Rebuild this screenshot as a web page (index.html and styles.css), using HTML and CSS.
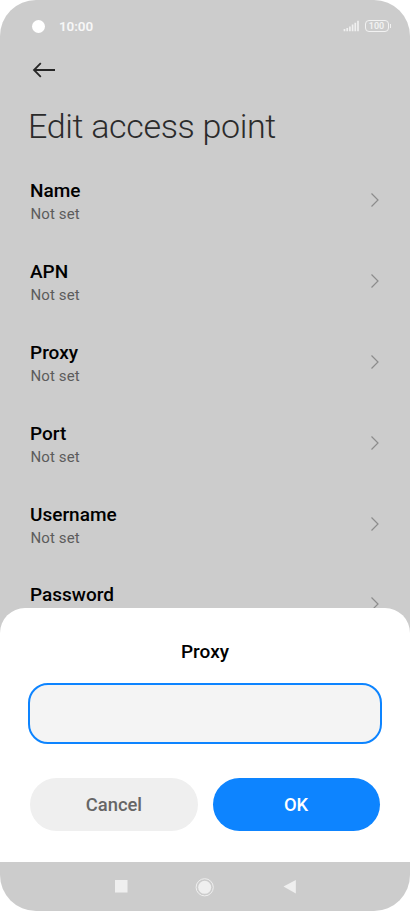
FILE: index.html
```html
<!DOCTYPE html>
<html lang="en">
<head>
<meta charset="utf-8">
<title>Edit access point</title>
<link rel="stylesheet" href="styles.css">
</head>
<body>
<div class="phone">
  <main class="page">
    <header class="status">
      <span class="camera"></span>
      <span class="time">10:00</span>
      <svg class="signal" width="17" height="12" viewBox="0 0 17 12"><path d="M1.500 9v2.300M4.200 8v3.300M6.900 6.400v4.900M9.600 4.500v6.800M12.300 2.800v8.500M15 .8v10.500"/></svg>
      <span class="battery"><span class="level">100</span></span>
    </header>
    <nav class="toolbar">
      <svg width="24" height="18" viewBox="0 0 24 18"><path d="M23 9H2M8.800 2.200 2 9l6.800 6.800"/></svg>
    </nav>
    <h1 class="title">Edit access point</h1>
    <ul class="list">
      <li class="row"><div class="text"><div class="label">Name</div><div class="value">Not set</div></div><svg class="chevron" width="10" height="16" viewBox="0 0 10 16"><path d="M1.500 1.500 8 8l-6.500 6.500"/></svg></li>
      <li class="row"><div class="text"><div class="label">APN</div><div class="value">Not set</div></div><svg class="chevron" width="10" height="16" viewBox="0 0 10 16"><path d="M1.500 1.500 8 8l-6.500 6.500"/></svg></li>
      <li class="row"><div class="text"><div class="label">Proxy</div><div class="value">Not set</div></div><svg class="chevron" width="10" height="16" viewBox="0 0 10 16"><path d="M1.500 1.500 8 8l-6.500 6.500"/></svg></li>
      <li class="row"><div class="text"><div class="label">Port</div><div class="value">Not set</div></div><svg class="chevron" width="10" height="16" viewBox="0 0 10 16"><path d="M1.500 1.500 8 8l-6.500 6.500"/></svg></li>
      <li class="row"><div class="text"><div class="label">Username</div><div class="value">Not set</div></div><svg class="chevron" width="10" height="16" viewBox="0 0 10 16"><path d="M1.500 1.500 8 8l-6.500 6.500"/></svg></li>
      <li class="row"><div class="text"><div class="label">Password</div></div><svg class="chevron" width="10" height="16" viewBox="0 0 10 16"><path d="M1.500 1.500 8 8l-6.500 6.500"/></svg></li>
    </ul>
  </main>
  <section class="sheet">
    <h2 class="sheet-title">Proxy</h2>
    <input class="field" type="text" aria-label="Proxy">
    <div class="actions">
      <button class="button cancel">Cancel</button>
      <button class="button ok">OK</button>
    </div>
  </section>
  <footer class="navbar">
    <svg width="190" height="22" viewBox="0 0 190 22">
      <rect class="key" x="5" y="4" width="12.500" height="12.500"/>
      <circle class="ring" cx="94.700" cy="11.300" r="8.600"/>
      <circle class="key" cx="94.700" cy="11.300" r="6.500"/>
      <path class="key" d="M185.800 4v13.400L173.500 10.500z"/>
    </svg>
  </footer>
</div>
</body>
</html>
```
FILE: styles.css
```css
* { box-sizing: border-box; }
body { margin: 0; background: #fff; font-family: Roboto, sans-serif; }
.phone {
  width: 410px; height: 911px; overflow: hidden;
  display: flex; flex-direction: column;
  background: #ccc; border-radius: 36px;
}
.page { height: 608px; flex: none; overflow: hidden; }
.status { height: 52px; padding: 0 19px 0 32px; display: flex; align-items: center; }
.camera { width: 13px; height: 13px; border-radius: 50%; background: #fff; }
.time { margin-left: 14px; font-size: 13.5px; font-weight: 600; letter-spacing: -0.1px; color: #f7f7f7; }
.signal { margin-left: auto; margin-right: 5px; fill: none; stroke: #f0f0f0; stroke-width: 1.7; }
.battery { display: flex; align-items: center; }
.level {
  width: 24px; height: 12px; border: 1.5px solid #f2f2f2; border-radius: 4px;
  font-size: 9px; line-height: 10px; font-weight: 600; color: #f2f2f2; text-align: center;
}
.battery::after { content: ""; width: 1.5px; height: 4px; margin-left: 1px; background: #f2f2f2; }
.toolbar { height: 36px; padding: 9px 0 0 32px; }
.toolbar svg { display: block; fill: none; stroke: #262626; stroke-width: 1.8; }
.title {
  margin: 0; padding: 18px 0 0 28px; height: 73px;
  font-size: 34px; line-height: 40px; font-weight: 300; letter-spacing: -0.33px; color: #2b2b2b; white-space: nowrap;
}
.list { margin: 0; padding: 0 30px; list-style: none; }
.row { height: 80.9px; display: flex; justify-content: space-between; align-items: center; }
.text { height: 45px; }
.label { font-size: 19px; line-height: 24px; font-weight: 500; color: #000; }
.value { font-size: 15px; line-height: 20px; margin-top: 1px; letter-spacing: 0.15px; padding-left: 0.4px; color: #5c5c5c; }
.chevron { fill: none; stroke: #8c8c8c; stroke-width: 1.2; margin-top: -3px; }
.sheet {
  height: 254px; flex: none; padding: 31px 28px 0;
  background: #fff; border-radius: 25px 25px 0 0;
}
.sheet-title { margin: 0; font-size: 19px; line-height: 26px; font-weight: 500; text-align: center; color: #000; }
.field {
  display: block; width: 354px; height: 61px; margin-top: 18px; padding: 0 16px;
  border: 2px solid #0d84ff; border-radius: 20px; background: #f4f4f4; outline: 0;
  font: 18px Roboto, sans-serif;
}
.actions { display: flex; gap: 15px; margin: 34px 2.3px 0; }
.button { flex: 1; height: 53px; padding: 0; border: 0; border-radius: 27px; font: 500 18.4px Roboto, sans-serif; }
.cancel { background: #efefef; color: #666; }
.ok { background: #0d84ff; color: #fff; }
.navbar { flex: 1; display: flex; justify-content: center; align-items: center; }
.key { fill: #efefef; }
.ring { fill: none; stroke: #efefef; stroke-width: 1; }
```
